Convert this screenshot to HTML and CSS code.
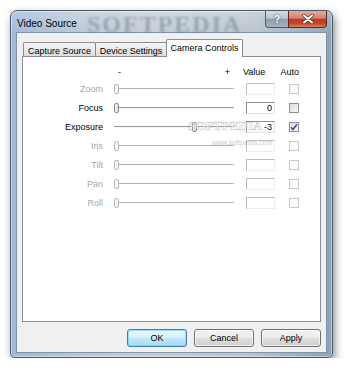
FILE: index.html
```html
<!DOCTYPE html>
<html>
<head>
  <title>Video Source</title>
  <link rel="stylesheet" href="styles.css">
</head>
<body>
  <div class="window">
    <div class="titlebar">
      <span class="title">Video Source</span>
      <span class="title-mark">SOFTPEDIA</span>
      <div class="caption-btns">
        <div class="cap help">?</div>
        <div class="cap close">
          <svg width="12" height="10" viewBox="0 0 12 10">
            <path d="M2 1.5 L10 8.5 M10 1.5 L2 8.5" stroke="#5a2a20" stroke-width="3.4" stroke-linecap="round"/>
            <path d="M2 1.5 L10 8.5 M10 1.5 L2 8.5" stroke="#ffffff" stroke-width="2" stroke-linecap="round"/>
          </svg>
        </div>
      </div>
    </div>

    <div class="client">
      <div class="tabs">
        <div class="tab tab-capture">Capture Source</div>
        <div class="tab tab-device">Device Settings</div>
        <div class="tab tab-camera active">Camera Controls</div>
      </div>

      <div class="panel">
        <div class="controls">
          <span></span>
          <div class="range-hdr"><span>-</span><span>+</span></div>
          <div class="value-hdr"><span class="hdr-value">Value</span><span class="hdr-auto">Auto</span></div>

          <span class="label off">Zoom</span>
          <div class="slider off"><div class="thumb"></div></div>
          <div class="edit off"></div>
          <div class="check off"></div>

          <span class="label">Focus</span>
          <div class="slider"><div class="thumb"></div></div>
          <div class="edit">0</div>
          <div class="check on"></div>

          <span class="label">Exposure</span>
          <div class="slider"><div class="thumb" style="margin-left: 78px"></div></div>
          <div class="edit">-3</div>
          <div class="check on">
            <svg width="8" height="8" viewBox="0 0 8 8">
              <path d="M1 4.2 L3 6.5 L7 1.2" fill="none" stroke="#2d4f94" stroke-width="1.5"/>
            </svg>
          </div>

          <span class="label off">Iris</span>
          <div class="slider off"><div class="thumb"></div></div>
          <div class="edit off"></div>
          <div class="check off"></div>

          <span class="label off">Tilt</span>
          <div class="slider off"><div class="thumb"></div></div>
          <div class="edit off"></div>
          <div class="check off"></div>

          <span class="label off">Pan</span>
          <div class="slider off"><div class="thumb"></div></div>
          <div class="edit off"></div>
          <div class="check off"></div>

          <span class="label off">Roll</span>
          <div class="slider off"><div class="thumb"></div></div>
          <div class="edit off"></div>
          <div class="check off"></div>
        </div>

        <div class="watermark">
          <div class="wm-big">SOFTPEDIA</div>
          <div class="wm-small">www.softpedia.com</div>
        </div>
      </div>

      <div class="buttons">
        <div class="btn default">OK</div>
        <div class="btn">Cancel</div>
        <div class="btn">Apply</div>
      </div>
    </div>
  </div>
</body>
</html>
```

FILE: styles.css
```css
body {
    margin: 0;
    background: #ffffff;
    font: 9px "Liberation Sans", Arial, sans-serif;
    color: #000000;
}

.window {
    width: 323px;
    height: 348px;
    margin: 10px 0 0 10px;
    box-sizing: border-box;
    display: flex;
    flex-direction: column;
    border: 1px solid #4a5868;
    border-radius: 7px 7px 5px 5px;
    background:
        linear-gradient(180deg, rgba(255,255,255,0.25), rgba(255,255,255,0) 25px),
        linear-gradient(90deg, #9db8d8 0%, #b8c6d4 20%, #c4ccd4 45%, #b9c4cd 75%, #8aa3b6 100%);
    box-shadow: 2px 4px 9px rgba(0, 0, 0, 0.45), inset 0 0 0 1px rgba(255, 255, 255, 0.45);
}

.titlebar {
    position: relative;
    height: 22px;
    display: flex;
    align-items: flex-start;
    padding: 0 5px 0 6px;
}

.title {
    margin-top: 7px;
    font-size: 10px;
    color: #000000;
    position: relative;
    z-index: 1;
}

.title-mark {
    position: absolute;
    left: 76px;
    top: 0;
    font: bold 24px "Liberation Serif", serif;
    letter-spacing: 2px;
    color: rgba(95, 115, 138, 0.45);
    filter: blur(1.2px);
}

.caption-btns {
    margin-left: auto;
    display: flex;
    position: relative;
    z-index: 1;
}

.cap {
    height: 17px;
    box-sizing: border-box;
    border: 1px solid #4c5a6a;
    border-top: none;
    display: flex;
    align-items: center;
    justify-content: center;
}

.help {
    width: 24px;
    border-radius: 0 0 0 4px;
    background: linear-gradient(180deg, #d5dde6 0%, #b9c4d0 45%, #8f9dad 52%, #a5b2c0 100%);
    font: bold 10px "Liberation Sans", Arial, sans-serif;
    color: #ffffff;
    text-shadow: 0 0 2px #304050;
}

.close {
    width: 39px;
    margin-left: -1px;
    border-color: #5a2a22;
    border-radius: 0 0 4px 0;
    background: linear-gradient(180deg, #e6aa9c 0%, #d5806d 45%, #b93a22 52%, #c8462c 80%, #dc8060 100%);
}

.client {
    flex: 1;
    margin: 0 6px 5px 6px;
    padding: 7px 5px 0 5px;
    background: #f0f0f0;
    box-shadow: 0 0 0 1px #8093a8;
    display: flex;
    flex-direction: column;
}

.tabs {
    display: flex;
    align-items: flex-end;
    height: 17px;
    padding-left: 1px;
    margin-bottom: -1px;
    position: relative;
    z-index: 1;
}

.tab {
    height: 14px;
    box-sizing: border-box;
    margin-bottom: 1px;
    border: 1px solid #898c95;
    border-bottom: none;
    background: linear-gradient(180deg, #f4f4f4 0%, #e9e9e9 50%, #dcdcdc 100%);
    display: flex;
    align-items: center;
    justify-content: center;
    padding-top: 2px;
    border-radius: 2px 2px 0 0;
}

.tab-capture { width: 73px; }
.tab-device { width: 72px; margin-left: -1px; }

.tab.active {
    width: 77px;
    height: 18px;
    margin-bottom: 0;
    margin-left: -1px;
    background: #ffffff;
    align-items: flex-start;
    padding-top: 3px;
}

.panel {
    position: relative;
    height: 266px;
    box-sizing: border-box;
    border: 1px solid #898c95;
    background: #ffffff;
    padding-top: 7px;
}

.controls {
    display: grid;
    grid-template-columns: 91px 132px 43px 10px;
    grid-template-rows: 15px repeat(7, 19px);
    align-items: center;
}

.range-hdr {
    width: 120px;
    display: flex;
    justify-content: space-between;
    padding: 0 4px 0 4px;
    box-sizing: border-box;
}

.value-hdr {
    grid-column: 3 / 5;
    display: flex;
    justify-content: space-between;
    margin-left: -3px;
}

.label {
    text-align: right;
    padding-right: 11px;
}

.label.off { color: #a8a8a8; }

.slider {
    width: 120px;
    height: 10px;
    display: flex;
    background: linear-gradient(#9a9a9a, #9a9a9a) 0 4px / 100% 1px no-repeat,
                linear-gradient(#f6f6f6, #f6f6f6) 0 5px / 100% 1px no-repeat;
}

.slider.off {
    background: linear-gradient(#b4b4b4, #b4b4b4) 0 4px / 100% 1px no-repeat;
}

.thumb {
    width: 5px;
    height: 10px;
    box-sizing: border-box;
    border: 1px solid #8a8a8a;
    border-radius: 2px;
    background: linear-gradient(90deg, #f7f7f7, #dedede);
}

.slider.off .thumb {
    border-color: #b8b8b8;
    background: #f6f6f6;
}

.edit {
    width: 29px;
    height: 12px;
    box-sizing: border-box;
    border: 1px solid;
    border-color: #8e8e8e #e2e2e2 #e2e2e2 #8e8e8e;
    text-align: right;
    padding-right: 2px;
    line-height: 10px;
}

.edit.off {
    border-color: #bdbdbd #ececec #ececec #bdbdbd;
}

.check {
    width: 10px;
    height: 10px;
    box-sizing: border-box;
    border: 1px solid #8f8f8f;
    background: linear-gradient(135deg, #dcdcdc, #f6f6f6);
    display: flex;
    align-items: center;
    justify-content: center;
}

.check.off {
    border-color: #c8c8c8;
    background: #fbfbfb;
}

.watermark {
    position: absolute;
    left: 165px;
    top: 62px;
    pointer-events: none;
}

.wm-big {
    font: bold 13px "Liberation Serif", serif;
    line-height: 13px;
    color: rgba(255, 255, 255, 0.6);
    -webkit-text-stroke: 0.7px rgba(170, 170, 170, 0.55);
}

.wm-small {
    margin: 7px 0 0 24px;
    font-size: 7px;
    line-height: 8px;
    color: rgba(150, 150, 150, 0.55);
}

.buttons {
    display: flex;
    justify-content: flex-end;
    gap: 7px;
    margin-top: 7px;
}

.btn {
    width: 60px;
    height: 18px;
    box-sizing: border-box;
    border: 1px solid #707070;
    border-radius: 3px;
    background: linear-gradient(180deg, #f2f2f2 0%, #ebebeb 48%, #dddddd 52%, #cfcfcf 100%);
    box-shadow: inset 0 0 0 1px rgba(255, 255, 255, 0.7);
    display: flex;
    align-items: center;
    justify-content: center;
}

.btn.default {
    border-color: #3c7fb1;
    background: linear-gradient(180deg, #eaf6fd 0%, #d9f0fc 48%, #bee6fd 52%, #a7d9f5 100%);
    box-shadow: inset 0 0 0 1px rgba(120, 210, 250, 0.7);
}
```
